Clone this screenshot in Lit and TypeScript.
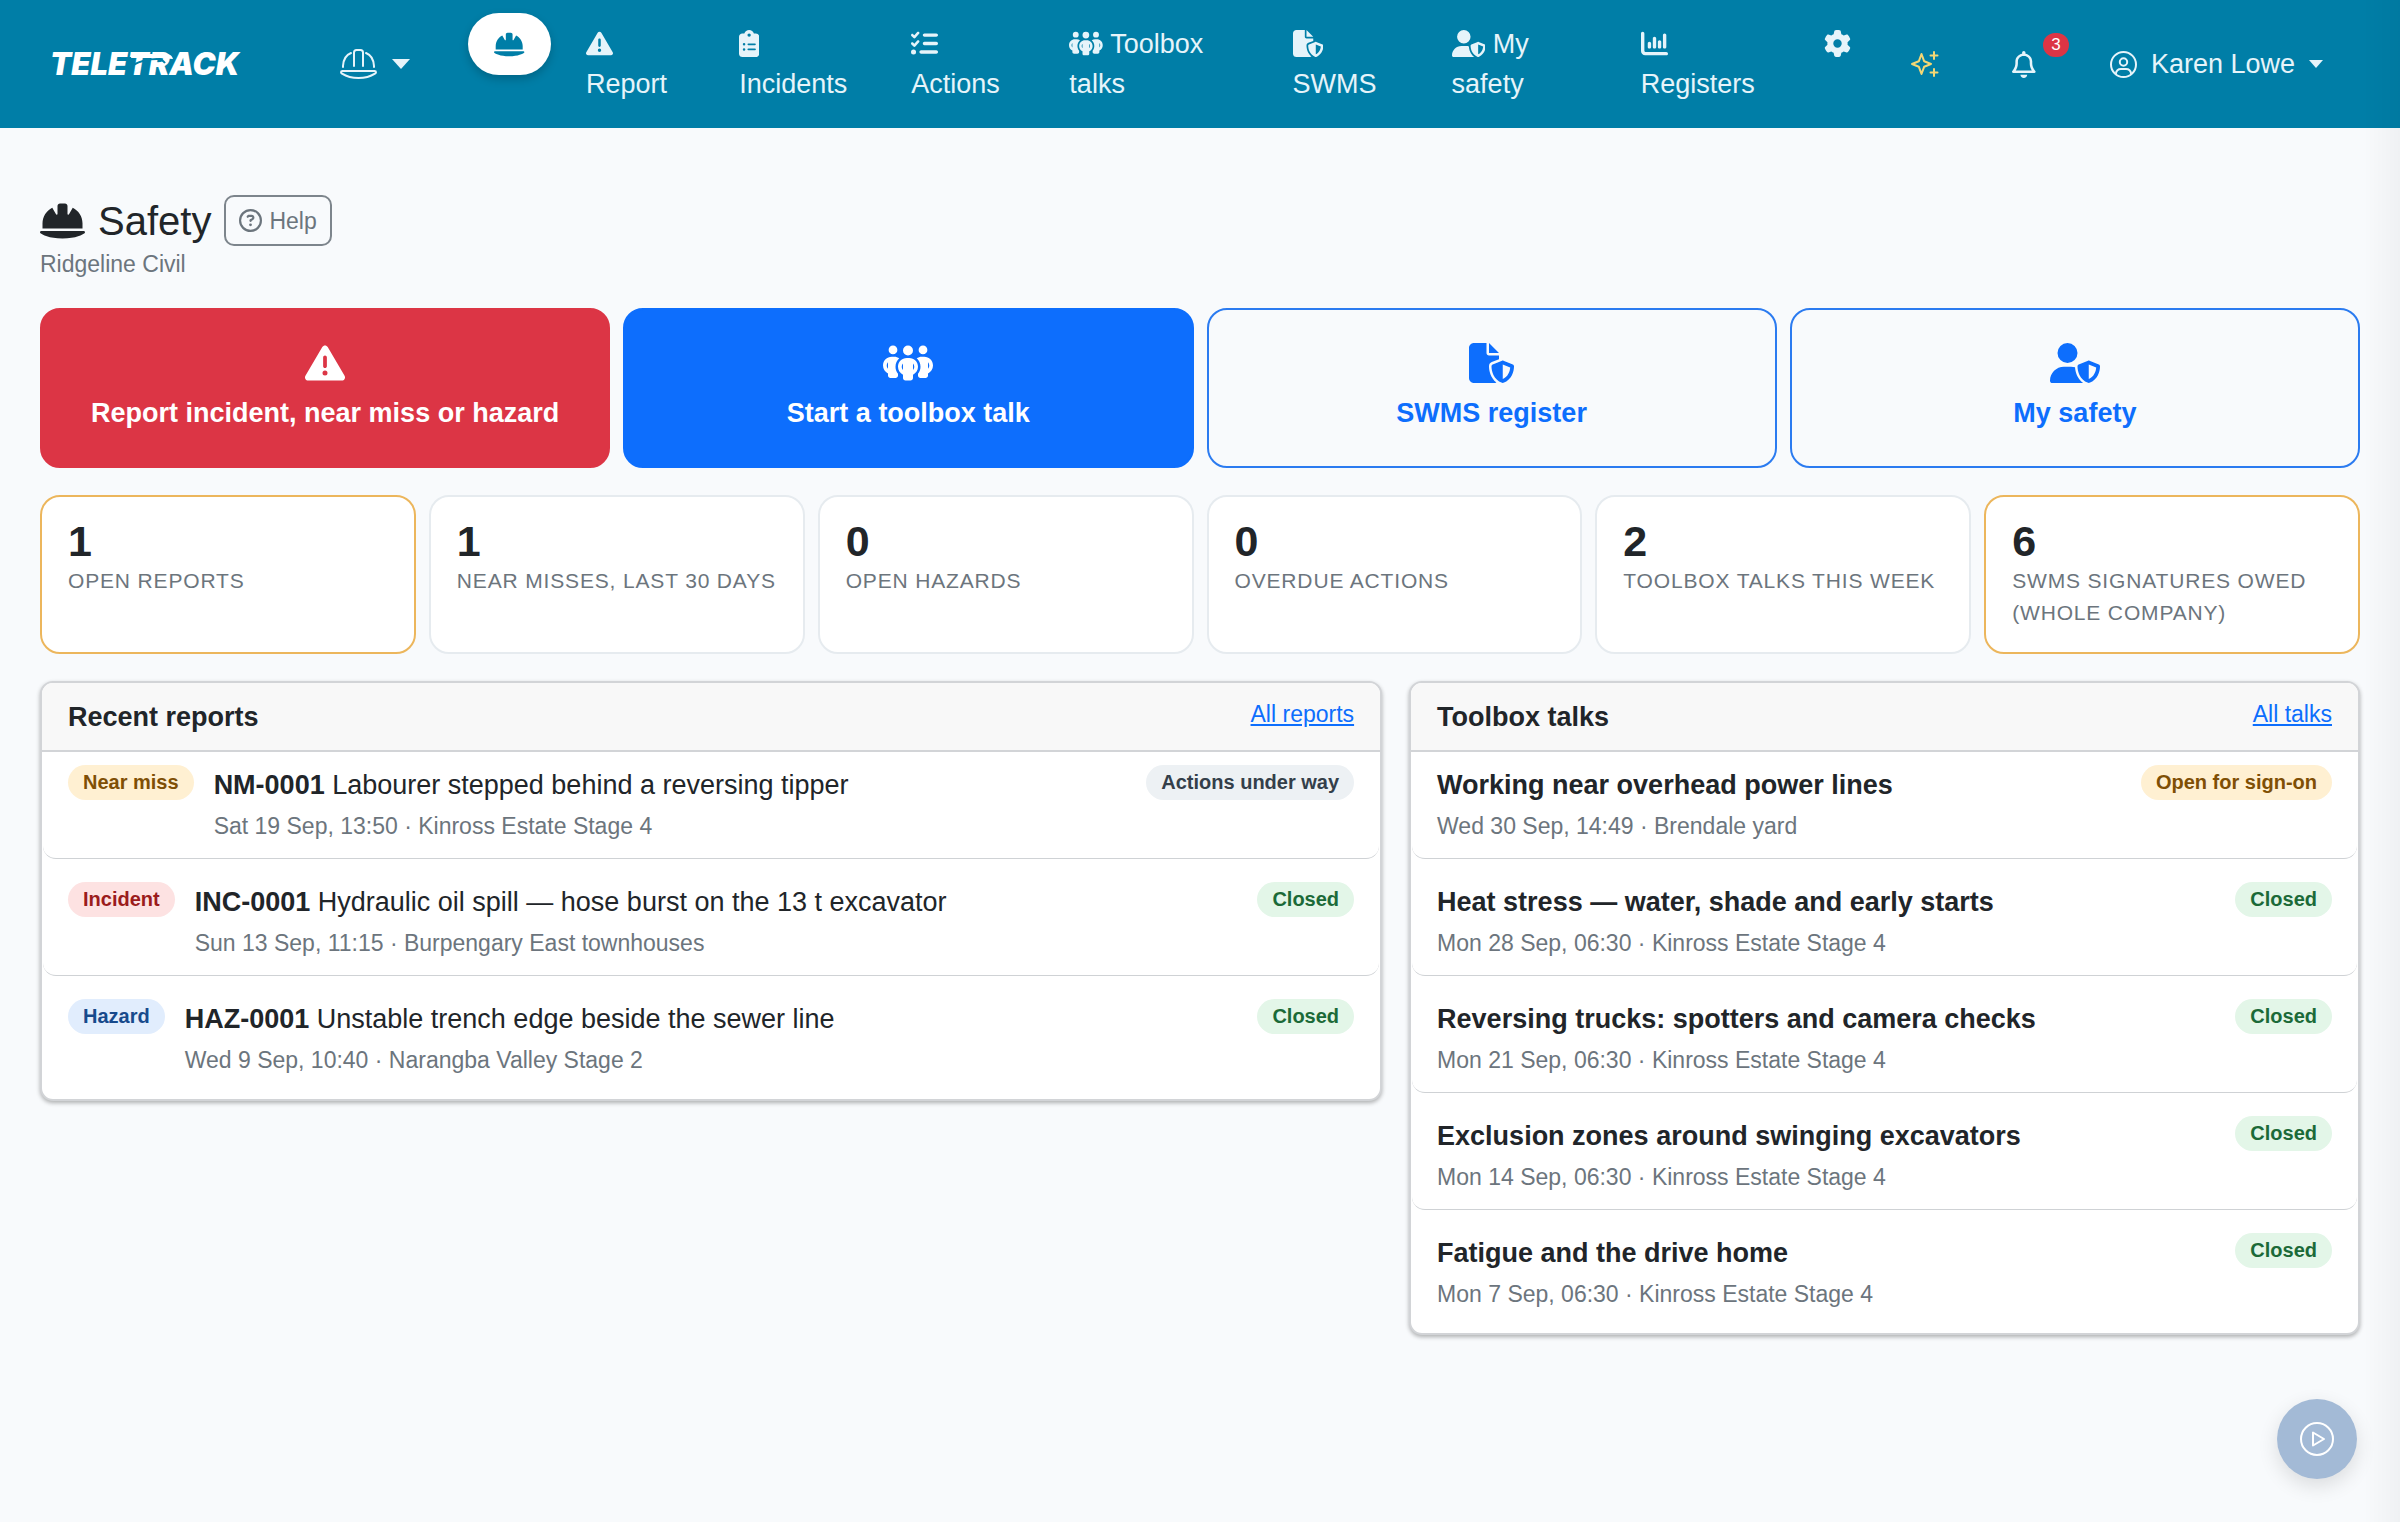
import { LitElement, html, css, svg, nothing } from "lit";
import { customElement, property } from "lit/decorators.js";
import { classMap } from "lit/directives/class-map.js";

type Glyph = { w: number; h: number; d: string };

const GLYPHS: Record<string, Glyph> = {
  warning: {
    w: 512, h: 512,
    d: "M256 32c14.2 0 27.3 7.5 34.5 19.8l216 368c7.3 12.4 7.3 27.7 .2 40.1S486.3 480 472 480H40c-14.3 0-27.6-7.7-34.7-20.1s-7-27.8 .2-40.1l216-368C228.7 39.5 241.8 32 256 32zm0 128c-13.3 0-24 10.7-24 24V296c0 13.3 10.7 24 24 24s24-10.7 24-24V184c0-13.3-10.7-24-24-24zm32 224a32 32 0 1 0 -64 0 32 32 0 1 0 64 0z",
  },
  clipboard: {
    w: 384, h: 512,
    d: "M192 0c-41.8 0-77.4 26.7-90.5 64H64C28.7 64 0 92.7 0 128V448c0 35.3 28.7 64 64 64H320c35.3 0 64-28.7 64-64V128c0-35.3-28.7-64-64-64H282.5C269.4 26.7 233.8 0 192 0zm0 64a32 32 0 1 1 0 64 32 32 0 1 1 0-64zM72 272a24 24 0 1 1 48 0 24 24 0 1 1 -48 0zm104-16H304c8.8 0 16 7.2 16 16s-7.2 16-16 16H176c-8.8 0-16-7.2-16-16s7.2-16 16-16zM72 368a24 24 0 1 1 48 0 24 24 0 1 1 -48 0zm88 0c0-8.8 7.2-16 16-16H304c8.8 0 16 7.2 16 16s-7.2 16-16 16H176c-8.8 0-16-7.2-16-16z",
  },
  checklist: {
    w: 512, h: 512,
    d: "M152.1 38.2c9.9 8.9 10.7 24 1.8 33.9l-72 80c-4.4 4.9-10.6 7.8-17.2 7.9s-12.9-2.4-17.6-7L7 113C-2.3 103.6-2.3 88.4 7 79s24.6-9.4 33.9 0l22.1 22.1 55.1-61.2c8.9-9.9 24-10.7 33.9-1.8zm0 160c9.9 8.9 10.7 24 1.8 33.9l-72 80c-4.4 4.9-10.6 7.8-17.2 7.9s-12.9-2.4-17.6-7L7 273c-9.4-9.4-9.4-24.6 0-33.9s24.6-9.4 33.9 0l22.1 22.1 55.1-61.2c8.9-9.9 24-10.7 33.9-1.8zM224 96c0-17.7 14.3-32 32-32H480c17.7 0 32 14.3 32 32s-14.3 32-32 32H256c-17.7 0-32-14.3-32-32zm0 160c0-17.7 14.3-32 32-32H480c17.7 0 32 14.3 32 32s-14.3 32-32 32H256c-17.7 0-32-14.3-32-32zM160 416c0-17.7 14.3-32 32-32H480c17.7 0 32 14.3 32 32s-14.3 32-32 32H192c-17.7 0-32-14.3-32-32zM48 368a48 48 0 1 1 0 96 48 48 0 1 1 0-96z",
  },
  people: {
    w: 640, h: 512,
    d: "M72 88a56 56 0 1 1 112 0A56 56 0 1 1 72 88zM64 245.7C54 256.9 48 271.8 48 288s6 31.1 16 42.3V245.7zm144.4-49.3C178.7 222.7 160 261.2 160 304c0 34.3 12 65.8 32 90.5V416c0 17.7-14.3 32-32 32H96c-17.7 0-32-14.3-32-32V389.2C26.2 371.2 0 332.7 0 288c0-61.9 50.1-112 112-112h32c24 0 46.2 7.5 64.4 20.3zM448 416V394.5c20-24.7 32-56.2 32-90.5c0-42.8-18.7-81.3-48.4-107.7C449.8 183.5 472 176 496 176h32c61.9 0 112 50.1 112 112c0 44.7-26.2 83.2-64 101.2V416c0 17.7-14.3 32-32 32H480c-17.7 0-32-14.3-32-32zm8-328a56 56 0 1 1 112 0A56 56 0 1 1 456 88zM576 245.7v84.7c10-11.3 16-26.1 16-42.3s-6-31.1-16-42.3zM320 32a64 64 0 1 1 0 128 64 64 0 1 1 0-128zM240 304c0 16.2 6 31 16 42.3V261.7c-10 11.3-16 26.1-16 42.3zm144-42.3v84.7c10-11.3 16-26.1 16-42.3s-6-31.1-16-42.3zM448 304c0 44.7-26.2 83.2-64 101.2V448c0 17.7-14.3 32-32 32H288c-17.7 0-32-14.3-32-32V405.2c-37.8-18-64-56.5-64-101.2c0-61.9 50.1-112 112-112h32c61.9 0 112 50.1 112 112z",
  },
  fileShield: {
    w: 576, h: 512,
    d: "M0 64C0 28.7 28.7 0 64 0H224V128c0 17.7 14.3 32 32 32H384v47l-92.8 37.1c-21.3 8.5-35.2 29.1-35.2 52c0 56.6 18.9 148 94.2 208.3c-9 4.8-19.3 7.6-30.2 7.6H64c-35.3 0-64-28.7-64-64V64zm384 64H256V0L384 128zm39.1 97.7c5.7-2.3 12.1-2.3 17.8 0l120 48C570 277.4 576 286.2 576 296c0 63.3-25.9 168.8-134.8 214.2c-5.9 2.5-12.6 2.5-18.5 0C313.9 464.8 288 359.3 288 296c0-9.8 6-18.6 15.1-22.3l120-48zM527.4 312L432 273.8V461.7c68.2-33 91.5-99 95.4-149.7z",
  },
  userShield: {
    w: 640, h: 512,
    d: "M224 256A128 128 0 1 0 224 0a128 128 0 1 0 0 256zm-45.7 48C79.8 304 0 383.8 0 482.3C0 498.7 13.3 512 29.7 512H418.3c1.8 0 3.5-.2 5.3-.5c-76.3-55.1-99.8-141-103.1-200.2c-16.1-4.8-33.1-7.3-50.7-7.3H178.3zm308.8-78.3l-120 48C358 277.4 352 286.2 352 296c0 63.3 25.9 168.8 134.8 214.2c5.9 2.5 12.6 2.5 18.5 0C614.1 464.8 640 359.3 640 296c0-9.8-6-18.6-15.1-22.3l-120-48c-5.7-2.3-12.1-2.3-17.8 0zM591.4 312c-3.9 50.7-27.2 116.7-95.4 149.7V273.8L591.4 312z",
  },
  chart: {
    w: 512, h: 512,
    d: "M32 32c17.7 0 32 14.3 32 32V400c0 8.8 7.2 16 16 16H480c17.7 0 32 14.3 32 32s-14.3 32-32 32H80c-44.2 0-80-35.8-80-80V64C0 46.3 14.3 32 32 32zM160 224c17.7 0 32 14.3 32 32v64c0 17.7-14.3 32-32 32s-32-14.3-32-32V256c0-17.7 14.3-32 32-32zm128-64V320c0 17.7-14.3 32-32 32s-32-14.3-32-32V160c0-17.7 14.3-32 32-32s32 14.3 32 32zm64 32c17.7 0 32 14.3 32 32v96c0 17.7-14.3 32-32 32s-32-14.3-32-32V224c0-17.7 14.3-32 32-32zM480 96V320c0 17.7-14.3 32-32 32s-32-14.3-32-32V96c0-17.7 14.3-32 32-32s32 14.3 32 32z",
  },
  gear: {
    w: 512, h: 512,
    d: "M495.9 166.6c3.2 8.7 .5 18.4-6.4 24.6l-43.3 39.4c1.1 8.3 1.7 16.8 1.7 25.4s-.6 17.1-1.7 25.4l43.3 39.4c6.9 6.2 9.6 15.9 6.4 24.6c-4.4 11.9-9.7 23.3-15.8 34.3l-4.7 8.1c-6.6 11-14 21.4-22.1 31.2c-5.9 7.2-15.7 9.6-24.5 6.8l-55.7-17.7c-13.4 10.3-28.2 18.9-44 25.4l-12.5 57.1c-2 9.1-9 16.3-18.2 17.8c-13.8 2.3-28 3.5-42.5 3.5s-28.7-1.2-42.5-3.5c-9.2-1.5-16.2-8.7-18.2-17.8l-12.5-57.1c-15.8-6.5-30.6-15.1-44-25.4L83.1 425.9c-8.8 2.8-18.6 .3-24.5-6.8c-8.1-9.8-15.5-20.2-22.1-31.2l-4.7-8.1c-6.1-11-11.4-22.4-15.8-34.3c-3.2-8.7-.5-18.4 6.4-24.6l43.3-39.4C64.6 273.1 64 264.6 64 256s.6-17.1 1.7-25.4L22.4 191.2c-6.9-6.2-9.6-15.9-6.4-24.6c4.4-11.9 9.7-23.3 15.8-34.3l4.7-8.1c6.6-11 14-21.4 22.1-31.2c5.9-7.2 15.7-9.6 24.5-6.8l55.7 17.7c13.4-10.3 28.2-18.9 44-25.4l12.5-57.1c2-9.1 9-16.3 18.2-17.8C227.3 1.2 241.5 0 256 0s28.7 1.2 42.5 3.5c9.2 1.5 16.2 8.7 18.2 17.8l12.5 57.1c15.8 6.5 30.6 15.1 44 25.4l55.7-17.7c8.8-2.8 18.6-.3 24.5 6.8c8.1 9.8 15.5 20.2 22.1 31.2l4.7 8.1c6.1 11 11.4 22.4 15.8 34.3zM256 336a80 80 0 1 0 0-160 80 80 0 1 0 0 160z",
  },
  helmet: {
    w: 576, h: 512,
    d: "M256 32c-17.7 0-32 14.3-32 32v2.3 99.6c0 5.6-4.5 10.1-10.1 10.1c-3.6 0-7-1.9-8.8-5.1L157.1 87C83 123.5 32 199.8 32 288v64H544l0-66.4c-.9-87.2-51.7-162.4-125.1-198.6l-48 83.9c-1.8 3.2-5.2 5.1-8.8 5.1c-5.6 0-10.1-4.5-10.1-10.1V66.3 64c0-17.7-14.3-32-32-32H256zM16.6 384C7.4 384 0 391.4 0 400.6c0 4.7 2 9.2 5.8 11.9C27.5 428.4 111.8 480 288 480s260.5-51.6 282.2-67.5c3.8-2.8 5.8-7.2 5.8-11.9c0-9.2-7.4-16.6-16.6-16.6H16.6z",
  },
  question: {
    w: 512, h: 512,
    d: "M464 256A208 208 0 1 0 48 256a208 208 0 1 0 416 0zM0 256a256 256 0 1 1 512 0A256 256 0 1 1 0 256zm169.8-90.7c7.9-22.3 29.1-37.3 52.8-37.3h58.3c34.9 0 63.1 28.3 63.1 63.1c0 22.6-12.1 43.5-31.7 54.8L280 264.4c-.2 13-10.9 23.6-24 23.6c-13.3 0-24-10.7-24-24V250.5c0-8.6 4.6-16.5 12.1-20.8l44.3-25.4c4.7-2.7 7.6-7.7 7.6-13.1c0-8.4-6.8-15.1-15.1-15.1H222.6c-3.4 0-6.4 2.1-7.5 5.3l-.4 1.2c-4.4 12.5-18.2 19-30.6 14.6s-19-18.2-14.6-30.6l.4-1.2zM224 352a32 32 0 1 1 64 0 32 32 0 1 1 -64 0z",
  },
  bell: {
    w: 448, h: 512,
    d: "M224 0c-17.7 0-32 14.3-32 32V49.9C119.5 61.4 64 124.2 64 200v33.4c0 45.4-15.5 89.5-43.8 124.9L5.3 377c-5.8 7.2-6.9 17.1-2.9 25.4S14.8 416 24 416H424c9.2 0 17.6-5.3 21.6-13.6s2.9-18.2-2.9-25.4l-14.9-18.6C399.5 322.9 384 278.8 384 233.4V200c0-75.8-55.5-138.6-128-150.1V32c0-17.7-14.3-32-32-32zm0 96h8c57.4 0 104 46.6 104 104v33.4c0 47.9 13.9 94.6 39.7 134.6H72.3C98.1 328 112 281.3 112 233.4V200c0-57.4 46.6-104 104-104h8zm64 352H224 160c0 17 6.7 33.3 18.7 45.3s28.3 18.7 45.3 18.7s33.3-6.7 45.3-18.7s18.7-28.3 18.7-45.3z",
  },
};

/** Solid glyph, sized by its height; the width follows the view box. */
@customElement("app-glyph")
class AppGlyph extends LitElement {
  @property() name = "warning";
  static styles = css`
    :host { display: inline-block; height: 27px; line-height: 0; }
    svg { display: block; height: 100%; width: auto; fill: currentColor; }
  `;
  render() {
    const g = GLYPHS[this.name];
    return html`<svg viewBox="0 0 ${g.w} ${g.h}" aria-hidden="true">${svg`<path d=${g.d}></path>`}</svg>`;
  }
}

type Tone = "amber" | "red" | "blue" | "grey" | "green";

interface Entry {
  kind?: string;
  kindTone?: Tone;
  code?: string;
  title: string;
  meta: string;
  status: string;
  tone: Tone;
}

/** Panel with a heading, a link and a list of entries. */
@customElement("entry-panel")
class EntryPanel extends LitElement {
  @property() heading = "";
  @property() link = "";
  @property({ attribute: false }) entries: Entry[] = [];

  static styles = css`
    :host { display: block; }
    * { box-sizing: border-box; }
    .panel {
      background: #fff;
      border: 2px solid #d2d4d7;
      border-radius: 13px;
      box-shadow: 0 2px 4px rgba(0, 0, 0, 0.3);
      overflow: hidden;
    }
    .head {
      display: flex;
      justify-content: space-between;
      align-items: flex-start;
      padding: 14px 26px 13px;
      background: #f8f8f8;
      border-bottom: 2px solid #d2d4d7;
    }
    h2 { margin: 0; font-size: 27px; line-height: 40px; font-weight: 700; }
    .head a { color: #0d6efd; font-size: 23px; line-height: 35px; }
    ul { list-style: none; margin: 0; padding: 0 1px; }
    li {
      display: flex;
      align-items: flex-start;
      gap: 20px;
      padding: 13px 25px 14px;
      border-bottom: 1px solid #cfd2d5;
      border-radius: 13px;
      margin-bottom: 10px;
    }
    li:last-child { border-bottom-color: transparent; margin-bottom: 6px; }
    .body { flex: 1; min-width: 0; display: flex; flex-direction: column; gap: 4px; }
    .title { font-size: 27px; line-height: 40px; }
    .meta { font-size: 23px; line-height: 35px; color: #6c757d; }
    .badge {
      font-size: 20px;
      line-height: 35px;
      font-weight: 700;
      padding: 0 15px;
      border-radius: 18px;
      white-space: nowrap;
    }
    .amber { background: #fff0d2; color: #7f4f05; }
    .red { background: #fde2e2; color: #9b1c1c; }
    .blue { background: #e1edfd; color: #174a8c; }
    .grey { background: #edf1f4; color: #343f4a; }
    .green { background: #e3f6e8; color: #1b6a38; }
  `;

  private badge(text: string, tone: Tone) {
    return html`<span class=${classMap({ badge: true, [tone]: true })}>${text}</span>`;
  }

  render() {
    return html`
      <section class="panel">
        <div class="head">
          <h2>${this.heading}</h2>
          <a href="#all">${this.link}</a>
        </div>
        <ul>
          ${this.entries.map(
            (e) => html`<li>
              ${e.kind ? this.badge(e.kind, e.kindTone!) : nothing}
              <div class="body">
                <div class="title">${e.code ? html`<b>${e.code}</b> ${e.title}` : html`<b>${e.title}</b>`}</div>
                <div class="meta">${e.meta}</div>
              </div>
              ${this.badge(e.status, e.tone)}
            </li>`
          )}
        </ul>
      </section>
    `;
  }
}

const NAV = [
  ["warning", "Report"],
  ["clipboard", "Incidents"],
  ["checklist", "Actions"],
  ["people", "Toolbox talks"],
  ["fileShield", "SWMS"],
  ["userShield", "My safety"],
  ["chart", "Registers"],
];

const TILES = [
  ["warning", "Report incident, near miss or hazard", "danger"],
  ["people", "Start a toolbox talk", "primary"],
  ["fileShield", "SWMS register", "outline"],
  ["userShield", "My safety", "outline"],
];

const STATS: [number, string, boolean][] = [
  [1, "Open reports", true],
  [1, "Near misses, last 30 days", false],
  [0, "Open hazards", false],
  [0, "Overdue actions", false],
  [2, "Toolbox talks this week", false],
  [6, "SWMS signatures owed (whole company)", true],
];

const REPORTS: Entry[] = [
  { kind: "Near miss", kindTone: "amber", code: "NM-0001", title: "Labourer stepped behind a reversing tipper", meta: "Sat 19 Sep, 13:50 · Kinross Estate Stage 4", status: "Actions under way", tone: "grey" },
  { kind: "Incident", kindTone: "red", code: "INC-0001", title: "Hydraulic oil spill — hose burst on the 13 t excavator", meta: "Sun 13 Sep, 11:15 · Burpengary East townhouses", status: "Closed", tone: "green" },
  { kind: "Hazard", kindTone: "blue", code: "HAZ-0001", title: "Unstable trench edge beside the sewer line", meta: "Wed 9 Sep, 10:40 · Narangba Valley Stage 2", status: "Closed", tone: "green" },
];

const TALKS: Entry[] = [
  { title: "Working near overhead power lines", meta: "Wed 30 Sep, 14:49 · Brendale yard", status: "Open for sign-on", tone: "amber" },
  { title: "Heat stress — water, shade and early starts", meta: "Mon 28 Sep, 06:30 · Kinross Estate Stage 4", status: "Closed", tone: "green" },
  { title: "Reversing trucks: spotters and camera checks", meta: "Mon 21 Sep, 06:30 · Kinross Estate Stage 4", status: "Closed", tone: "green" },
  { title: "Exclusion zones around swinging excavators", meta: "Mon 14 Sep, 06:30 · Kinross Estate Stage 4", status: "Closed", tone: "green" },
  { title: "Fatigue and the drive home", meta: "Mon 7 Sep, 06:30 · Kinross Estate Stage 4", status: "Closed", tone: "green" },
];

@customElement("app-root")
class AppRoot extends LitElement {
  static styles = css`
    :host {
      display: block;
      min-height: 100vh;
      background: #f8fafc;
      color: #212529;
      font-family: "Liberation Sans", Arial, sans-serif;
      font-size: 27px;
      line-height: 40px;
    }
    * { box-sizing: border-box; }
    a { text-decoration: none; color: inherit; }
    button { font: inherit; color: inherit; background: none; border: 0; padding: 0; text-align: left; cursor: pointer; }
    svg { display: block; }

    header {
      display: flex;
      align-items: center;
      padding: 24px 77px 24px 50px;
      background: #007ea7;
      color: #e6f4fa;
    }
    .brand {
      position: relative;
      width: 290px;
      color: #fff;
      font-family: Inter, "Liberation Sans", sans-serif;
      font-weight: 900;
      font-style: italic;
      font-size: 31px;
    }
    .swoosh { position: absolute; left: 80px; top: 6px; }
    .switch { display: flex; align-items: center; gap: 15px; width: 128px; }
    .caret { border: 9px solid transparent; border-top: 10px solid currentColor; border-bottom: 0; }
    .caret.small { border-width: 8px 7px 0; }
    nav {
      flex: 1;
      align-self: stretch;
      display: grid;
      grid-template-columns: 118fr 153fr 172fr 158fr 223fr 159fr 189fr 183fr 87fr;
    }
    nav a { padding-right: 44px; }
    nav a.gear { padding-right: 0; }
    nav app-glyph { vertical-align: -4px; }
    nav a.active {
      display: flex;
      align-items: center;
      justify-content: center;
      width: 83px;
      height: 62px;
      margin-top: -11px;
      padding: 0;
      border-radius: 31px;
      background: #fff;
      color: #007ea7;
      box-shadow: 0 4px 10px rgba(0, 0, 0, 0.2);
    }
    .tools { display: flex; align-items: center; }
    .spark { width: 101px; color: #f4d774; }
    .alerts { position: relative; width: 98px; height: 27px; line-height: 0; }
    .count {
      position: absolute;
      left: 31px;
      top: -18px;
      min-width: 26px;
      height: 24px;
      border-radius: 13px;
      background: #dc3545;
      color: #fff;
      font-size: 17px;
      line-height: 24px;
      text-align: center;
    }
    .user { display: flex; align-items: center; gap: 14px; }

    main { padding: 67px 40px 40px; }
    .heading { display: flex; align-items: center; gap: 13px; height: 51px; }
    .heading app-glyph { height: 40px; }
    h1 { margin: 0; font-size: 40px; line-height: 48px; font-weight: 400; }
    .help {
      display: flex;
      align-items: center;
      gap: 7px;
      height: 51px;
      padding: 0 13px;
      border: 2px solid #7d858c;
      border-radius: 10px;
      color: #6c757d;
      font-size: 23px;
    }
    .help app-glyph { height: 23px; }
    .company { font-size: 23px; line-height: 36px; color: #6c757d; }

    .tiles { display: grid; grid-template-columns: repeat(4, 1fr); gap: 13px; margin-top: 26px; }
    .tile {
      display: flex;
      flex-direction: column;
      align-items: center;
      gap: 10px;
      padding: 33px 20px;
      border: 2px solid #2b7bf0;
      border-radius: 20px;
      font-weight: 700;
      color: #0d6efd;
    }
    .tile app-glyph { height: 40px; }
    .tile.danger { background: #dc3545; border-color: #dc3545; color: #fff; }
    .tile.primary { background: #0d6efd; border-color: #0d6efd; color: #fff; }

    .stats { display: grid; grid-template-columns: repeat(6, 1fr); gap: 13px; margin-top: 27px; }
    .stat {
      padding: 20px 18px 23px 26px;
      background: #fff;
      border: 2px solid #e6ebef;
      border-radius: 20px;
    }
    .stat.alert { border-color: #ecb65c; }
    .value { font-size: 43px; line-height: 48px; font-weight: 700; }
    .label {
      font-size: 21px;
      line-height: 32px;
      letter-spacing: 0.04em;
      text-transform: uppercase;
      color: #6c757d;
    }

    .panels {
      display: grid;
      grid-template-columns: repeat(12, 1fr);
      gap: 27px;
      align-items: start;
      margin-top: 27px;
    }
    .wide { grid-column: span 7; }
    .narrow { grid-column: span 5; }

    .tour {
      position: fixed;
      right: 43px;
      bottom: 43px;
      width: 80px;
      height: 80px;
      display: flex;
      align-items: center;
      justify-content: center;
      border-radius: 50%;
      background: #a3bad6;
      color: #fff;
      box-shadow: 0 7px 20px rgba(0, 0, 0, 0.12);
    }
    .edge {
      position: fixed;
      top: 0;
      right: 0;
      bottom: 0;
      width: 36px;
      background: linear-gradient(to right, transparent, rgba(0, 0, 0, 0.035));
      pointer-events: none;
    }
  `;

  render() {
    return html`
      <header>
        <a class="brand" href="#home">TELETRACK<svg class="swoosh" width="44" height="26" viewBox="0 0 44 26" aria-hidden="true">
            <path fill="#fff" d="M2 4H38Q42 5 43 9L30 8H1Z"></path>
            <path fill="none" stroke="#007ea7" stroke-width="2" d="M3 15Q14 9 27 9Q32 9 35 13"></path>
          </svg></a>
        <button class="switch" aria-label="Switch module">
          <svg width="37" height="30" viewBox="0 0 37 30" fill="none" stroke="currentColor" stroke-width="2" stroke-linejoin="round" stroke-linecap="round">
            <path d="M14 17V3.500Q14 1 16.500 1H20.500Q23 1 23 3.500V17"></path>
            <path d="M3 18V17Q3.500 7 11 4M34 18V17Q33.500 7 26 4"></path>
            <path d="M2.500 22H34.500Q36 22 36 23.200Q36 24 35 24.600Q28 29 18.500 29Q9 29 2 24.600Q1 24 1 23.200Q1 22 2.500 22Z"></path>
          </svg>
          <span class="caret"></span>
        </button>
        <nav aria-label="Safety">
          <a class="active" href="#safety" aria-label="Safety"><app-glyph name="helmet"></app-glyph></a>
          ${NAV.map(([icon, label]) => html`<a href="#${icon}"><app-glyph name=${icon}></app-glyph> ${label}</a>`)}
          <a class="gear" href="#settings" aria-label="Settings"><app-glyph name="gear"></app-glyph></a>
        </nav>
        <div class="tools">
          <button class="spark" aria-label="Assistant">
            <svg width="28" height="28" viewBox="0 0 28 28" fill="none" stroke="currentColor" stroke-width="2" stroke-linejoin="round" stroke-linecap="round">
              <path d="M10.500 4L13.200 11.300L20 14L13.200 16.700L10.500 24L7.800 16.700L1 14L7.800 11.300Z"></path>
              <path d="M23 2V9M19.500 5.500H26.500M23 19V26M19.500 22.500H26.500"></path>
            </svg>
          </button>
          <button class="alerts" aria-label="Notifications">
            <app-glyph name="bell"></app-glyph><span class="count">3</span>
          </button>
          <button class="user">
            <svg width="27" height="27" viewBox="0 0 27 27" fill="none" stroke="currentColor" stroke-width="2">
              <circle cx="13.500" cy="13.500" r="12.500"></circle>
              <circle cx="13.500" cy="11" r="3.700"></circle>
              <path d="M5.800 23Q6.500 18 11 18H16Q20.500 18 21.200 23"></path>
            </svg>
            Karen Lowe
            <span class="caret small"></span>
          </button>
        </div>
      </header>
      <main>
        <div class="heading">
          <app-glyph name="helmet"></app-glyph>
          <h1>Safety</h1>
          <button class="help"><app-glyph name="question"></app-glyph>Help</button>
        </div>
        <div class="company">Ridgeline Civil</div>
        <div class="tiles">
          ${TILES.map(
            ([icon, label, kind]) => html`<a class="tile ${kind}" href="#${icon}"><app-glyph name=${icon}></app-glyph><span>${label}</span></a>`
          )}
        </div>
        <div class="stats">
          ${STATS.map(
            ([value, label, alert]) => html`<div class=${classMap({ stat: true, alert })}>
              <div class="value">${value}</div>
              <div class="label">${label}</div>
            </div>`
          )}
        </div>
        <div class="panels">
          <entry-panel class="wide" heading="Recent reports" link="All reports" .entries=${REPORTS}></entry-panel>
          <entry-panel class="narrow" heading="Toolbox talks" link="All talks" .entries=${TALKS}></entry-panel>
        </div>
      </main>
      <button class="tour" aria-label="Play the tour">
        <svg width="34" height="34" viewBox="0 0 34 34" fill="none" stroke="currentColor" stroke-width="2" stroke-linejoin="round">
          <circle cx="17" cy="17" r="16"></circle>
          <path d="M13 10.500V23.500L24 17Z"></path>
        </svg>
      </button>
      <div class="edge"></div>
    `;
  }
}
